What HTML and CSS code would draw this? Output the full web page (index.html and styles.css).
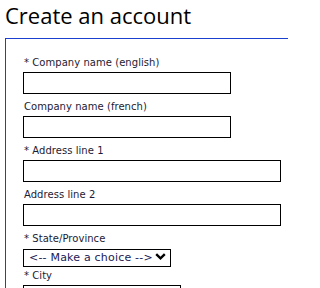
FILE: index.html
```html
<!DOCTYPE html>
<html lang="en">
<head>
<meta charset="utf-8">
<title>Create an account</title>
<link rel="stylesheet" href="styles.css">
</head>
<body>
<div class="page">
  <h1 class="title">Create an account</h1>
  <form class="form">
    <fieldset class="box">
      <div class="field">
        <label class="label" for="cn-en">* Company name (english)</label>
        <input class="input w-md" id="cn-en" type="text">
      </div>
      <div class="field">
        <label class="label" for="cn-fr">Company name (french)</label>
        <input class="input w-md" id="cn-fr" type="text">
      </div>
      <div class="field">
        <label class="label" for="a1">* Address line 1</label>
        <input class="input w-lg" id="a1" type="text">
      </div>
      <div class="field">
        <label class="label" for="a2">Address line 2</label>
        <input class="input w-lg" id="a2" type="text">
      </div>
      <div class="field field-select">
        <label class="label label-tight" for="st">* State/Province</label>
        <div class="select-wrap">
          <select class="select" id="st">
            <option>&lt;-- Make a choice --&gt;</option>
          </select>
          <svg class="chev" width="11" height="7" viewBox="0 0 11 7" aria-hidden="true"><path d="M1.2 1.2 L5.5 5.3 L9.8 1.2" fill="none" stroke="#000" stroke-width="2.4"/></svg>
        </div>
      </div>
      <div class="field">
        <label class="label" for="city">* City</label>
        <input class="input w-sm" id="city" type="text">
      </div>
    </fieldset>
  </form>
</div>
</body>
</html>
```
FILE: styles.css
```css
html, body {
  margin: 0;
  padding: 0;
  background: #fff;
  overflow: hidden;
}
.page {
  width: 288px;
  height: 288px;
  overflow: hidden;
  box-sizing: border-box;
  padding-left: 5px;
}
.title {
  margin: 0 0 8px 0;
  font-family: "Open Sans", "Noto Sans", sans-serif;
  font-weight: 500;
  font-size: 22px;
  line-height: 30px;
  height: 30px;
  color: #000;
}
.form {
  margin: 0;
}
.box {
  margin: 0;
  width: 283px;
  min-width: 0;
  box-sizing: border-box;
  border: 1px solid #1b3fd1;
  border-right: 0;
  padding: 18px 0 40px 17px;
  display: flex;
  flex-direction: column;
}
.field {
  display: flex;
  flex-direction: column;
  align-items: flex-start;
  margin-bottom: 7px;
}
.field-select {
  margin-bottom: 5px;
}
.label {
  font-family: "DejaVu Sans", Verdana, sans-serif;
  font-size: 10px;
  line-height: 12px;
  letter-spacing: 0.05px;
  color: #1d1a33;
  margin: 0 0 3px 1px;
}
.label-tight {
  margin-bottom: 2px;
}
.input {
  box-sizing: border-box;
  height: 22px;
  border: 1px solid #000;
  border-radius: 0;
  margin: 0;
  padding: 0 3px;
  background: #fff;
}
.w-md { width: 208px; }
.w-lg { width: 258px; }
.w-sm { width: 158px; }
.select-wrap {
  position: relative;
  width: 148px;
  height: 18px;
}
.select {
  appearance: none;
  -webkit-appearance: none;
  box-sizing: border-box;
  width: 148px;
  height: 18px;
  margin: 0;
  border: 1px solid #000;
  border-radius: 0;
  background: #fff;
  padding: 0 0 0 5px;
  font-family: "DejaVu Sans", Verdana, sans-serif;
  font-size: 11px;
  letter-spacing: 0.2px;
  line-height: 16px;
  color: #201a55;
}
.chev {
  position: absolute;
  right: 5px;
  top: 6px;
  pointer-events: none;
}
```
